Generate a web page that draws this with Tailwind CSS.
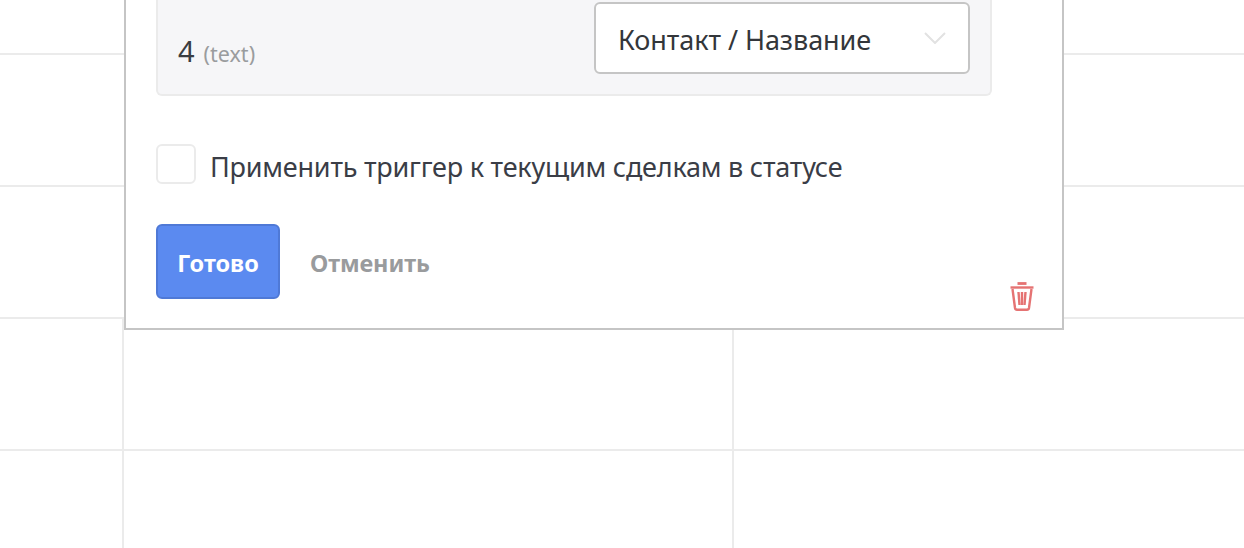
<!DOCTYPE html>
<html lang="ru">
<head>
<meta charset="utf-8">
<script src="https://cdn.jsdelivr.net/npm/@tailwindcss/browser@4"></script>
</head>
<body class="bg-white font-['Noto_Sans',sans-serif]">
<div class="relative w-[1244px] h-[548px] overflow-hidden">
  <div class="grid grid-cols-[124px_610px_510px] grid-rows-[55px_132px_132px_132px_132px]">
    <div class="col-span-3 border-b-2 border-[#ebebeb]"></div>
    <div class="col-span-3 border-b-2 border-[#ebebeb]"></div>
    <div class="col-span-3 border-b-2 border-[#ebebeb]"></div>
    <div class="border-b-2 border-r-2 border-[#ebebeb]"></div>
    <div class="border-b-2 border-r-2 border-[#ebebeb]"></div>
    <div class="border-b-2 border-[#ebebeb]"></div>
    <div class="border-b-2 border-r-2 border-[#ebebeb]"></div>
    <div class="border-b-2 border-r-2 border-[#ebebeb]"></div>
    <div class="border-b-2 border-[#ebebeb]"></div>
  </div>
  <div class="absolute left-[124px] top-[-20px] w-[940px] h-[350px] bg-white border-2 border-[#c5c5c5] px-[30px] pt-0">
    <div class="w-[836px] h-[114px] bg-[#f6f6f8] border-2 border-t-0 border-[#ebebeb] rounded-b-[6px] flex items-end justify-between pl-[20px] pr-[20px] pb-[20px]">
      <div class="flex items-baseline gap-[9px] mb-[5px]">
        <span class="text-[29px] leading-[36px] text-[#3a3d42]">4</span>
        <span class="text-[21.5px] leading-[28px] text-[#9a9c9e]">(text)</span>
      </div>
      <div class="w-[376px] h-[72px] bg-white border-2 border-[#c5c5c5] rounded-[6px] flex items-center justify-between pl-[22px] pr-[22px] pt-[4px]">
        <span class="text-[27px] leading-[36px] text-[#33363a] tracking-[-0.06px]">Контакт / Название</span>
        <svg class="mb-[4px]" width="22" height="12" viewBox="0 0 22 12" fill="none" stroke="#e2e2e2" stroke-width="2"><path d="M1 1l10 10L21 1"/></svg>
      </div>
    </div>
    <div class="mt-[48px] h-10 flex items-center gap-[14px]">
      <span class="w-10 h-10 bg-white border-2 border-[#ebebeb] rounded-[6px]"></span>
      <span class="text-[27px] leading-[40px] text-[#3a3d46] tracking-[-0.22px] pt-[6px]">Применить триггер к текущим сделкам в статусе</span>
    </div>
    <div class="mt-[40px] h-[75px] flex items-center gap-[30px]">
      <button class="w-[124px] h-[75px] bg-[#5b8af0] border-2 border-[#4f79d6] rounded-[6px] text-white text-[23.5px] font-bold pt-[5px]">Готово</button>
      <span class="text-[23.5px] font-bold text-[#999b9d] tracking-[-0.1px] pt-[5px]">Отменить</span>
    </div>
    <svg class="absolute left-[882px] top-[299px]" width="28" height="32" viewBox="0 0 28 32" fill="none" stroke="#e57373" stroke-width="2.4">
      <path d="M9.500 2.500h9" stroke-width="2.800"/><path d="M2.500 6.500h23" stroke-width="2.400"/><path d="M4.500 8l2.500 19q.3 1.700 2 1.700h10q1.700 0 2-1.700L23.500 8"/><path d="M10.500 11l1 13"/><path d="M14 11v13"/><path d="M17.500 11l-1 13"/>
    </svg>
  </div>
</div>
</body>
</html>
